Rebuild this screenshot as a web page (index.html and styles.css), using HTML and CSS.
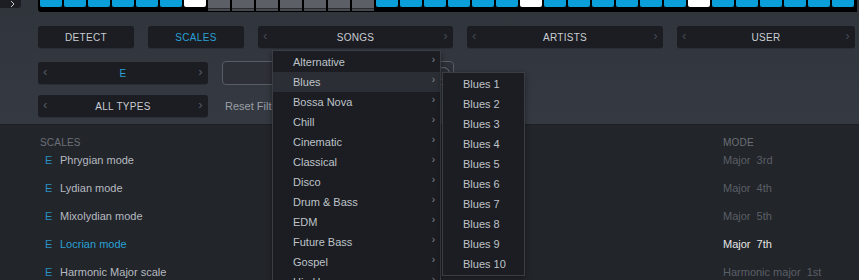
FILE: index.html
```html
<!DOCTYPE html>
<html lang="en">
<head>
  <meta charset="UTF-8">
  <title>Scales</title>
  <link rel="stylesheet" href="styles.css">
</head>
<body>
  <div class="app">
    <div class="top">
      <div class="keys-row">
        <div class="corner">
          <svg width="6" height="6" viewBox="0 0 6 6"><path d="M1 0 L4 3 L1 6" fill="none" stroke="#c9ccd1" stroke-width="1"/></svg>
        </div>
        <div class="keyboard">
          <span class="key"></span><span class="key"></span><span class="key"></span><span class="key"></span><span class="key"></span><span class="key"></span>
          <span class="key white"></span>
          <span class="key grey"></span><span class="key grey"></span><span class="key grey"></span><span class="key grey"></span><span class="key grey"></span><span class="key grey"></span><span class="key grey"></span>
          <span class="key"></span><span class="key"></span><span class="key"></span><span class="key"></span><span class="key"></span><span class="key"></span>
          <span class="key white"></span>
          <span class="key"></span><span class="key"></span><span class="key"></span><span class="key"></span><span class="key"></span><span class="key"></span>
          <span class="key white"></span>
          <span class="key"></span><span class="key"></span><span class="key"></span><span class="key"></span><span class="key"></span><span class="key"></span>
        </div>
      </div>

      <div class="tabs">
        <div class="btn w96">DETECT</div>
        <div class="btn w96 active">SCALES</div>
        <div class="btn w195"><span class="arr">‹</span>SONGS<span class="arr">›</span></div>
        <div class="btn w196"><span class="arr">‹</span>ARTISTS<span class="arr">›</span></div>
        <div class="btn w178"><span class="arr">‹</span>USER<span class="arr">›</span></div>
      </div>

      <div class="filters">
        <div class="select"><span class="arr">‹</span><span class="blue">E</span><span class="arr">›</span></div>
        <div class="search"><span class="clear"></span></div>
        <div class="select"><span class="arr">‹</span>ALL TYPES<span class="arr">›</span></div>
        <div class="reset">Reset Filters</div>
      </div>
    </div>

    <div class="list">
      <div class="list-head">
        <span>SCALES</span>
        <span>MODE</span>
      </div>
      <div class="row"><span class="root">E</span><span class="name">Phrygian mode</span><span class="mode">Major&nbsp; 3rd</span></div>
      <div class="row"><span class="root">E</span><span class="name">Lydian mode</span><span class="mode">Major&nbsp; 4th</span></div>
      <div class="row"><span class="root">E</span><span class="name">Mixolydian mode</span><span class="mode">Major&nbsp; 5th</span></div>
      <div class="row selected"><span class="root">E</span><span class="name">Locrian mode</span><span class="mode">Major&nbsp; 7th</span></div>
      <div class="row"><span class="root">E</span><span class="name">Harmonic Major scale</span><span class="mode">Harmonic major&nbsp; 1st</span></div>
    </div>

    <!-- ジャンルのドロップダウン -->
    <div class="menu">
      <div class="item">Alternative<span class="sub">›</span></div>
      <div class="item hover">Blues<span class="sub">›</span></div>
      <div class="item">Bossa Nova<span class="sub">›</span></div>
      <div class="item">Chill<span class="sub">›</span></div>
      <div class="item">Cinematic<span class="sub">›</span></div>
      <div class="item">Classical<span class="sub">›</span></div>
      <div class="item">Disco<span class="sub">›</span></div>
      <div class="item">Drum &amp; Bass<span class="sub">›</span></div>
      <div class="item">EDM<span class="sub">›</span></div>
      <div class="item">Future Bass<span class="sub">›</span></div>
      <div class="item">Gospel<span class="sub">›</span></div>
      <div class="item">Hip Hop<span class="sub">›</span></div>
    </div>
    <div class="submenu">
      <div class="item">Blues 1</div>
      <div class="item">Blues 2</div>
      <div class="item">Blues 3</div>
      <div class="item">Blues 4</div>
      <div class="item">Blues 5</div>
      <div class="item">Blues 6</div>
      <div class="item">Blues 7</div>
      <div class="item">Blues 8</div>
      <div class="item">Blues 9</div>
      <div class="item">Blues 10</div>
    </div>
  </div>
</body>
</html>
```

FILE: styles.css
```css
/* 共通スタイル */
body {
  margin: 0;
  background: #22252a;
  font-family: 'Liberation Sans', Arial, sans-serif;
  font-size: 11px;
  color: #b6bac0;
  overflow: hidden;
}
.app {
  position: relative;
  width: 859px;
  height: 280px;
  overflow: hidden;
}
.top {
  height: 124px;
  background: linear-gradient(#30343b, #353941);
  border-bottom: 1px solid #1d1f23;
}

/* 鍵盤 */
.keys-row { display: flex; align-items: flex-start; }
.corner {
  width: 21px;
  height: 8px;
  margin-right: 17px;
  background: #1c1e23;
  border-bottom-right-radius: 3px;
  display: flex;
  justify-content: flex-end;
  align-items: flex-start;
  padding: 1px 5px 0 0;
  box-sizing: border-box;
}
.corner svg { display: block; }
.keyboard {
  display: flex;
  align-items: flex-start;
  gap: 2px;
  height: 12px;
  box-sizing: border-box;
  padding: 0 3px 0 2px;
  background: #000;
  border-bottom-left-radius: 3px;
}
.key {
  width: 22px;
  height: 7px;
  background: #0a9fd9;
  border-radius: 0 0 2px 2px;
}
.key.white { background: #fff; }
.key.grey {
  height: 8px;
  background: #5c5f66;
  border-bottom: 1px solid #2b2d31;
  box-shadow: 0 2px 0 #46494f;
  border-radius: 0;
  box-sizing: border-box;
  height: 9px;
}

/* タブ */
.tabs {
  display: flex;
  gap: 14px;
  margin-top: 14px;
  padding-left: 38px;
}
.btn, .select {
  height: 22px;
  display: flex;
  align-items: center;
  justify-content: center;
  position: relative;
  background: #1b1d22;
  border-radius: 3px;
  font-size: 10px;
  letter-spacing: 0.3px;
  color: #c9cdd3;
  box-shadow: 0 1px 0 #2b2e34;
}
.btn.active { color: #2aa0d4; }
.w96 { width: 96px; }
.w195 { width: 195px; }
.w196 { width: 196px; }
.w178 { width: 178px; }
.arr {
  position: absolute;
  top: 2px;
  font-size: 13px;
  color: #464a52;
}
.arr:first-child { left: 5px; }
.arr:last-child { right: 5px; }
.blue { color: #2aa0d4; }

/* フィルター */
.filters {
  display: grid;
  grid-template-columns: 170px 232px;
  column-gap: 14px;
  row-gap: 10px;
  margin-top: 14px;
  padding-left: 38px;
}
.select .arr { color: #565a62; }
.search {
  height: 24px;
  margin-top: -1px;
  box-sizing: border-box;
  border: 1px solid #585c64;
  border-radius: 4px;
  background: #2d3037;
  display: flex;
  justify-content: flex-end;
  align-items: center;
  padding-right: 3px;
}
.clear {
  width: 11px;
  height: 11px;
  border: 1px solid #6a6e76;
  border-radius: 50%;
}
.reset {
  padding-left: 3px;
  line-height: 22px;
  color: #9a9fa7;
}

/* 一覧 */
.list { padding-top: 12px; }
.list-head {
  display: grid;
  grid-template-columns: 683px auto;
  padding-left: 40px;
  height: 12px;
  line-height: 12px;
  margin-bottom: 4px;
  font-size: 10px;
  letter-spacing: 0.2px;
  color: #6b7078;
}
.row {
  display: grid;
  grid-template-columns: 20px 663px auto;
  padding-left: 40px;
  height: 14px;
  line-height: 14px;
  margin-bottom: 14px;
}
.root { padding-left: 5px; color: #2a8fc2; }
.name { color: #b6bac0; }
.mode { color: #5b5f67; }
.row.selected .name { color: #2aa0d4; }
.row.selected .mode { color: #e6e6e6; }

/* ドロップダウン */
.menu, .submenu {
  position: absolute;
  box-sizing: border-box;
  background: #1b1d22;
  border: 1px solid #3a3d44;
  padding-top: 1px;
  box-shadow: 0 2px 6px rgba(0,0,0,0.4);
}
.menu { left: 272px; top: 50px; width: 169px; height: 250px; }
.submenu { left: 442px; top: 72px; width: 83px; height: 204px; }
.item {
  position: relative;
  height: 20px;
  line-height: 20px;
  padding-left: 20px;
  color: #bfc3c9;
}
.item.hover { background: #2b2e34; }
.sub {
  position: absolute;
  right: 5px;
  top: -2px;
  color: #858991;
  font-size: 10px;
}
```
